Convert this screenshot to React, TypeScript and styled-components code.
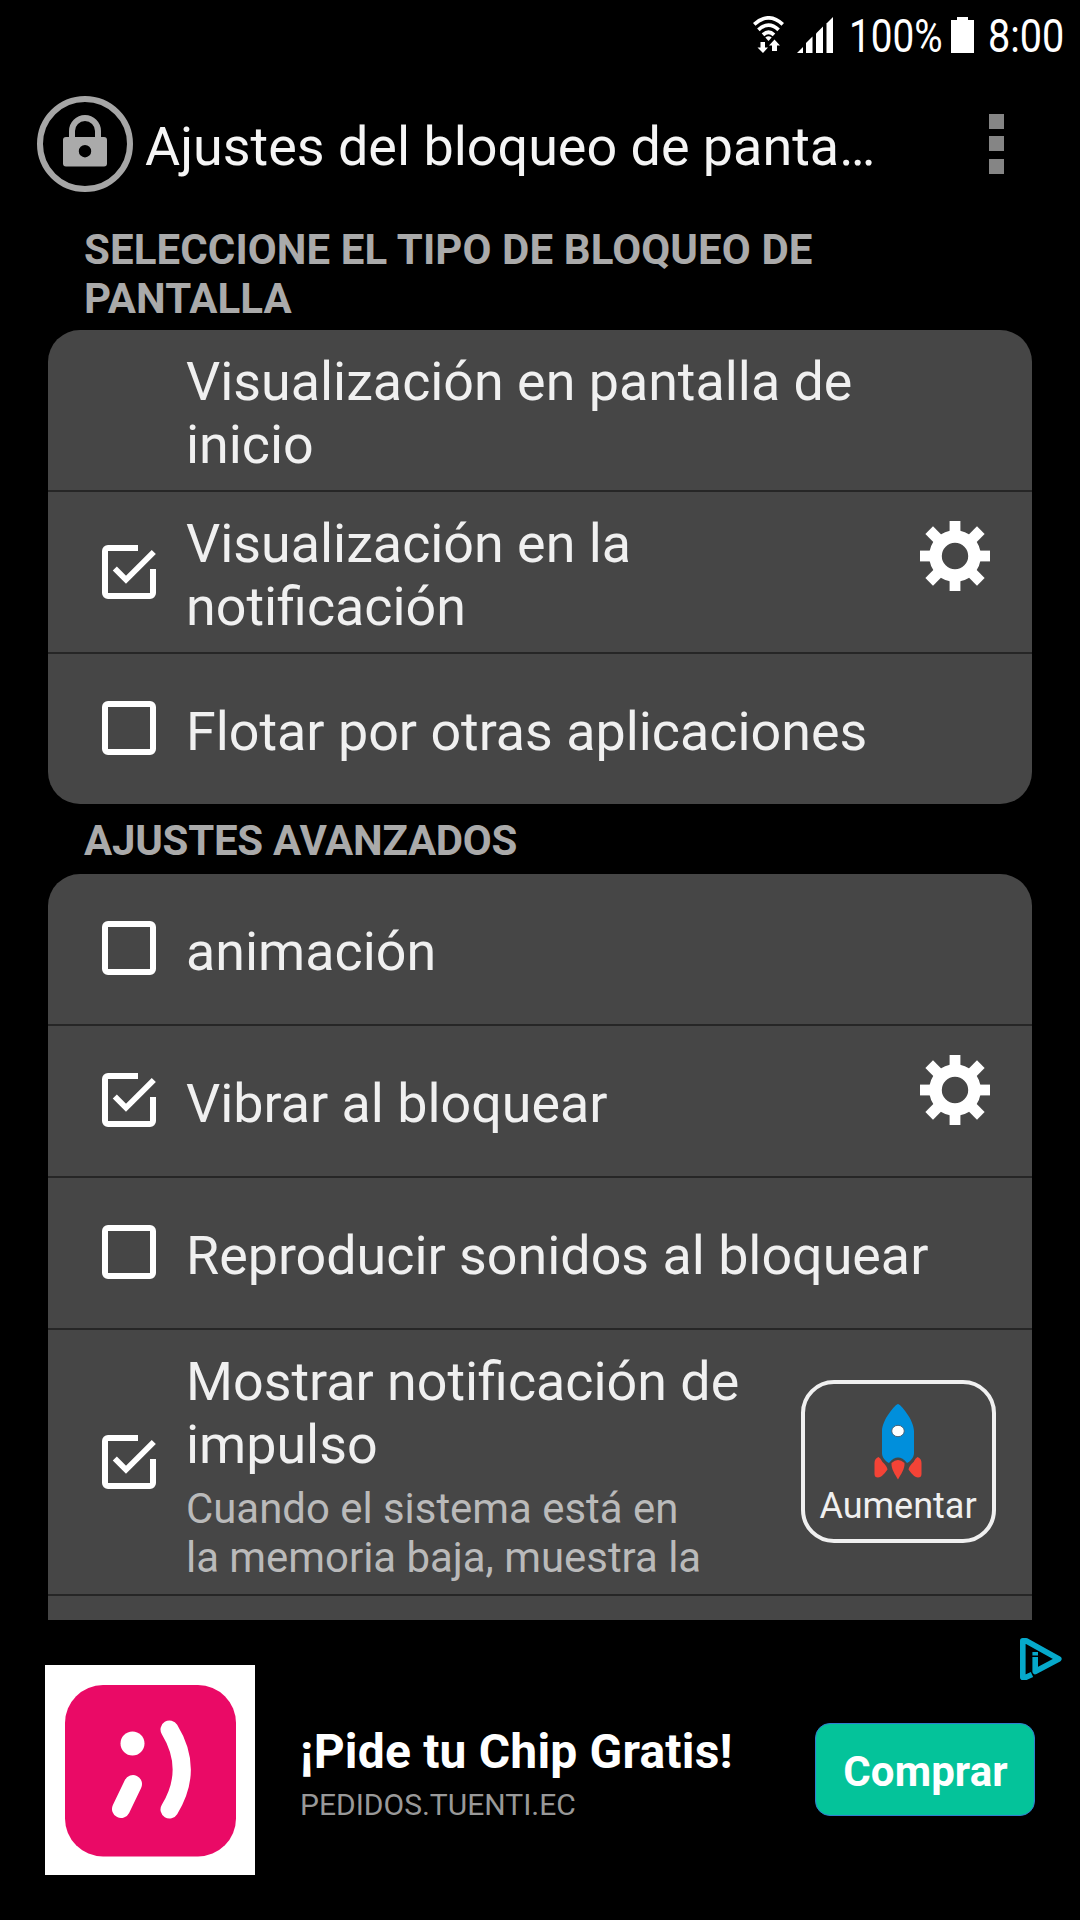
import React from "react";
import styled, { createGlobalStyle } from "styled-components";

const GlobalStyle = createGlobalStyle`
  html, body { margin: 0; padding: 0; background: #000; }
  *, *::before, *::after { box-sizing: border-box; }
`;

const Screen = styled.div`
  width: 1080px;
  height: 1920px;
  background: #000;
  display: flex;
  flex-direction: column;
  overflow: hidden;
  font-family: Roboto, "Noto Sans", sans-serif;
  color: #f0f0f0;
`;

const StatusBar = styled.div`
  flex: none;
  height: 72px;
  display: flex;
  align-items: flex-start;
  padding: 9px 0 0 753px;
`;

const StatusIcon = styled.svg<{ $gap: number }>`
  flex: none;
  margin: 7px ${(p) => p.$gap}px 0 0;
  fill: #fff;
`;

const StatusText = styled.span<{ $width: number; $squeeze: number }>`
  flex: none;
  width: ${(p) => p.$width}px;
  font-size: 46px;
  line-height: 54px;
  color: #fff;
  white-space: nowrap;
  transform: scaleX(${(p) => p.$squeeze});
  transform-origin: 0 50%;
`;

const Header = styled.header`
  flex: none;
  height: 144px;
  display: flex;
  align-items: center;
  padding: 0 76px 0 37px;
`;

const Title = styled.h1`
  flex: 1;
  margin: 5px 0 0 12px;
  font-size: 53.9px;
  line-height: 63px;
  font-weight: 400;
  color: #f5f5f5;
  white-space: nowrap;
`;

const Overflow = styled.div`
  display: grid;
  grid-template-rows: 22px 23px 15px;
`;

const OverflowDot = styled.i`
  width: 15px;
  height: 15px;
  background: #858585;
`;

const Settings = styled.main`
  flex: none;
  height: 1404px;
  padding: 0 48px;
  overflow: hidden;
`;

const SectionTitle = styled.h2<{ $top: number; $bottom: number; $tracking: number }>`
  margin: 0;
  padding: ${(p) => p.$top}px 36px ${(p) => p.$bottom}px;
  font-size: 42px;
  line-height: 49px;
  font-weight: 700;
  letter-spacing: ${(p) => p.$tracking}px;
  color: #aaa;
`;

const Card = styled.section`
  background: #464646;
  border-radius: 32px;
  overflow: hidden;
`;

const Row = styled.div<{ $height: number }>`
  height: ${(p) => p.$height}px;
  display: flex;
  align-items: center;
  padding: 0 36px 0 54px;
  box-sizing: content-box;
  & + & { border-top: 2px solid #262626; }
`;

const CheckSlot = styled.div<{ $lift: number }>`
  flex: none;
  width: 84px;
  height: 54px;
  margin-bottom: ${(p) => p.$lift}px;
`;

const Labels = styled.div<{ $top: number }>`
  flex: 1;
  padding-top: ${(p) => p.$top}px;
`;

const Label = styled.div`
  font-size: 53.8px;
  line-height: 63px;
  color: #f0f0f0;
  white-space: nowrap;
`;

const Summary = styled.div`
  margin-top: 8px;
  font-size: 41.9px;
  line-height: 49px;
  color: #bababa;
  white-space: nowrap;
`;

const GearButton = styled.button`
  align-self: flex-start;
  flex: none;
  margin: 29px 6px 0 0;
  padding: 0;
  width: 70px;
  height: 70px;
  border: 0;
  background: none;
`;

const BoostButton = styled.button`
  flex: none;
  width: 195px;
  height: 163px;
  margin-bottom: 2px;
  padding: 20px 1px 0 0;
  display: flex;
  flex-direction: column;
  align-items: center;
  border: 4px solid #f0f0f0;
  border-radius: 33px;
  background: none;
  color: #f0f0f0;
  font: 400 36px/42px Roboto, "Noto Sans", sans-serif;
`;

const BoostLabel = styled.span`
  margin-top: 5px;
`;

const Ad = styled.footer`
  flex: 1;
  position: relative;
  display: flex;
  align-items: flex-start;
  padding: 45px 45px 0;
`;

const AdText = styled.div`
  flex: 1;
  padding: 59px 0 0 45px;
  white-space: nowrap;
`;

const AdTitle = styled.div`
  font-size: 48px;
  line-height: 56px;
  font-weight: 700;
  letter-spacing: 0.18px;
  color: #fff;
`;

const AdHost = styled.div`
  margin-top: 7px;
  font-size: 30px;
  line-height: 35px;
  color: #999;
`;

const AdAction = styled.button`
  flex: none;
  width: 220px;
  height: 93px;
  margin-top: 58px;
  padding: 3px 0 0 1px;
  border: 1px solid #2f7fd0;
  border-radius: 15px;
  background: #04c39a;
  color: #fff;
  font: 700 42px/49px Roboto, "Noto Sans", sans-serif;
  letter-spacing: 0.1px;
`;

const AdChoices = styled.svg`
  position: absolute;
  top: 18px;
  right: 18px;
`;

const Wifi = () => (
  <StatusIcon $gap={13} width="31" height="37" viewBox="0 0 31 37">
    <g fill="none" stroke="#fff" strokeWidth="3.7">
      <path d="M1.200 8.400Q15.500 -4.600 29.800 8.400" />
      <path d="M5.400 13.800Q15.500 4.400 25.600 13.800" />
      <path d="M10 18.800Q15.500 13.600 21 18.800" />
    </g>
    <path d="M12.300 21.500Q15.500 18.800 18.700 21.500L15.500 25Z" />
    <path d="M7.500 26h4.500v5.500h3L10 37L4.500 31.500h3Z" />
    <path d="M19 35h5v-5.500h3L21.500 23.500L16 29.500h3Z" />
  </StatusIcon>
);

const Signal = () => (
  <StatusIcon $gap={15} width="37" height="37" viewBox="0 0 37 37">
    <path d="M0 37L6 31V37Z" />
    <path d="M9 37V27L15.500 20.500V37Z" />
    <path d="M19 37V17.500L26 10.500V37Z" />
    <path d="M29.500 37V7.500L36 1V37Z" />
  </StatusIcon>
);

const Battery = () => (
  <StatusIcon $gap={14} width="23" height="37" viewBox="0 0 23 37">
    <path d="M6 1H17V4H23V37H0V4H6Z" />
  </StatusIcon>
);

const LockBadge = () => (
  <svg width="96" height="96" viewBox="0 0 96 96">
    <circle cx="48" cy="48" r="45" fill="none" stroke="#a6a6a6" strokeWidth="6" />
    <path d="M35 42V35a13 13 0 0 1 26 0V42" fill="none" stroke="#aaa" strokeWidth="6" />
    <path
      fillRule="evenodd"
      fill="#aaa"
      d="M29 41H67a3 3 0 0 1 3 3V67.500a3 3 0 0 1 -3 3H29a3 3 0 0 1 -3 -3V44a3 3 0 0 1 3 -3ZM48 49a6.200 6.200 0 1 0 0 12.400a6.200 6.200 0 1 0 0 -12.400Z"
    />
  </svg>
);

const CheckIcon = ({ checked }: { checked: boolean }) => (
  <svg width="54" height="54" viewBox="0 0 54 54" fill="none" stroke="#fff" strokeWidth="6">
    {checked ? (
      <>
        <path d="M36 3H6a3 3 0 0 0 -3 3V48a3 3 0 0 0 3 3H48a3 3 0 0 0 3 -3V24" />
        <path d="M12.800 23.500L24 34.700L51.800 7" strokeWidth="5.800" />
      </>
    ) : (
      <rect x="3" y="3" width="48" height="48" rx="3" />
    )}
  </svg>
);

const Gear = () => (
  <svg width="70" height="70" viewBox="-35 -35 70 70">
    {[0, 45, 90, 135, 180, 225, 270, 315].map((a) => (
      <rect key={a} x="-5.400" y={a % 90 ? -36.500 : -35} width="10.800" height="14" fill="#fff" transform={`rotate(${a})`} />
    ))}
    <circle r="19.500" fill="none" stroke="#fff" strokeWidth="12.600" />
  </svg>
);

const Rocket = () => (
  <svg width="48" height="76" viewBox="0 0 48 76">
    <path
      fill="#008fdc"
      d="M24 0C21.500 0 8 16 8 27V49C8 53 11 57 15 59C18 55 21 53.500 24 53.500S30 55 33 59C37 57 40 53 40 49V27C40 16 26.500 0 24 0Z"
    />
    <ellipse cx="24" cy="27" rx="6.300" ry="5.700" fill="#fff" stroke="#46637a" strokeWidth="1" />
    <g fill="#f44336">
      <path d="M17.500 59Q24 53 30.500 59C31 65 26.500 71 24 75.500C21.500 71 17 65 17.500 59Z" />
      <path d="M4.500 53Q0.500 54.500 0.500 59V70Q0.500 73.500 4 73.500Q8 73.500 13.500 65.500Q13 62 8.500 58Q6.500 54 4.500 53Z" />
      <path d="M43.500 53Q47.500 54.500 47.500 59V70Q47.500 73.500 44 73.500Q40 73.500 34.500 65.500Q35 62 39.500 58Q41.500 54 43.500 53Z" />
    </g>
  </svg>
);

const BrandLogo = () => (
  <svg width="210" height="210" viewBox="0 0 210 210">
    <rect width="210" height="210" fill="#fff" />
    <rect x="20" y="20" width="171" height="171.500" rx="38" fill="#ea0a66" />
    <circle cx="87.500" cy="78.500" r="12" fill="#fff" />
    <g fill="none" stroke="#fff" strokeWidth="18" strokeLinecap="round">
      <path d="M88 119L76 144" />
      <path d="M124.500 64.500Q149 104.500 124.500 144.500" />
    </g>
  </svg>
);

type Item = {
  lines: string[];
  height: number;
  checked?: boolean;
  gear?: boolean;
  boost?: boolean;
  summary?: string[];
};

const lockTypes: Item[] = [
  { lines: ["Visualización en pantalla de", "inicio"], height: 160 },
  { lines: ["Visualización en la", "notificación"], height: 160, checked: true, gear: true },
  { lines: ["Flotar por otras aplicaciones"], height: 150, checked: false },
];

const advanced: Item[] = [
  { lines: ["animación"], height: 150, checked: false },
  { lines: ["Vibrar al bloquear"], height: 150, checked: true, gear: true },
  { lines: ["Reproducir sonidos al bloquear"], height: 150, checked: false },
  {
    lines: ["Mostrar notificación de", "impulso"],
    height: 264,
    checked: true,
    boost: true,
    summary: ["Cuando el sistema está en", "la memoria baja, muestra la"],
  },
  { lines: [], height: 150 },
];

const SettingRow = ({ item }: { item: Item }) => (
  <Row $height={item.height}>
    <CheckSlot $lift={item.lines.length === 1 ? 2 : 0}>
      {item.checked !== undefined && <CheckIcon checked={item.checked} />}
    </CheckSlot>
    <Labels $top={item.summary ? 8 : item.lines.length === 1 ? 5 : 6}>
      {item.lines.map((l) => (
        <Label key={l}>{l}</Label>
      ))}
      {item.summary && (
        <Summary>
          {item.summary.map((l) => (
            <div key={l}>{l}</div>
          ))}
        </Summary>
      )}
    </Labels>
    {item.gear && (
      <GearButton>
        <Gear />
      </GearButton>
    )}
    {item.boost && (
      <BoostButton>
        <Rocket />
        <BoostLabel>Aumentar</BoostLabel>
      </BoostButton>
    )}
  </Row>
);

export default function App() {
  return (
    <Screen>
      <GlobalStyle />
      <StatusBar>
        <Wifi />
        <Signal />
        <StatusText $width={102} $squeeze={0.842}>
          100%
        </StatusText>
        <Battery />
        <StatusText $width={90} $squeeze={0.86}>
          8:00
        </StatusText>
      </StatusBar>
      <Header>
        <LockBadge />
        <Title>Ajustes del bloqueo de panta…</Title>
        <Overflow>
          <OverflowDot />
          <OverflowDot />
          <OverflowDot />
        </Overflow>
      </Header>
      <Settings>
        <SectionTitle $top={9} $bottom={7} $tracking={0.1}>
          SELECCIONE EL TIPO DE BLOQUEO DE PANTALLA
        </SectionTitle>
        <Card>
          {lockTypes.map((item, i) => (
            <SettingRow key={i} item={item} />
          ))}
        </Card>
        <SectionTitle $top={12} $bottom={9} $tracking={-0.26}>
          AJUSTES AVANZADOS
        </SectionTitle>
        <Card>
          {advanced.map((item, i) => (
            <SettingRow key={i} item={item} />
          ))}
        </Card>
      </Settings>
      <Ad>
        <BrandLogo />
        <AdText>
          <AdTitle>¡Pide tu Chip Gratis!</AdTitle>
          <AdHost>PEDIDOS.TUENTI.EC</AdHost>
        </AdText>
        <AdAction>Comprar</AdAction>
        <AdChoices width="42" height="42" viewBox="0 0 42 42" fill="none" stroke="#06a9cb" strokeWidth="5.600" strokeLinejoin="round">
          <path d="M12 36.500L6 39.200H2.800V2.800H6L38.800 21L15.200 33.500V19" />
          <path d="M15.200 14v3.500" />
        </AdChoices>
      </Ad>
    </Screen>
  );
}
